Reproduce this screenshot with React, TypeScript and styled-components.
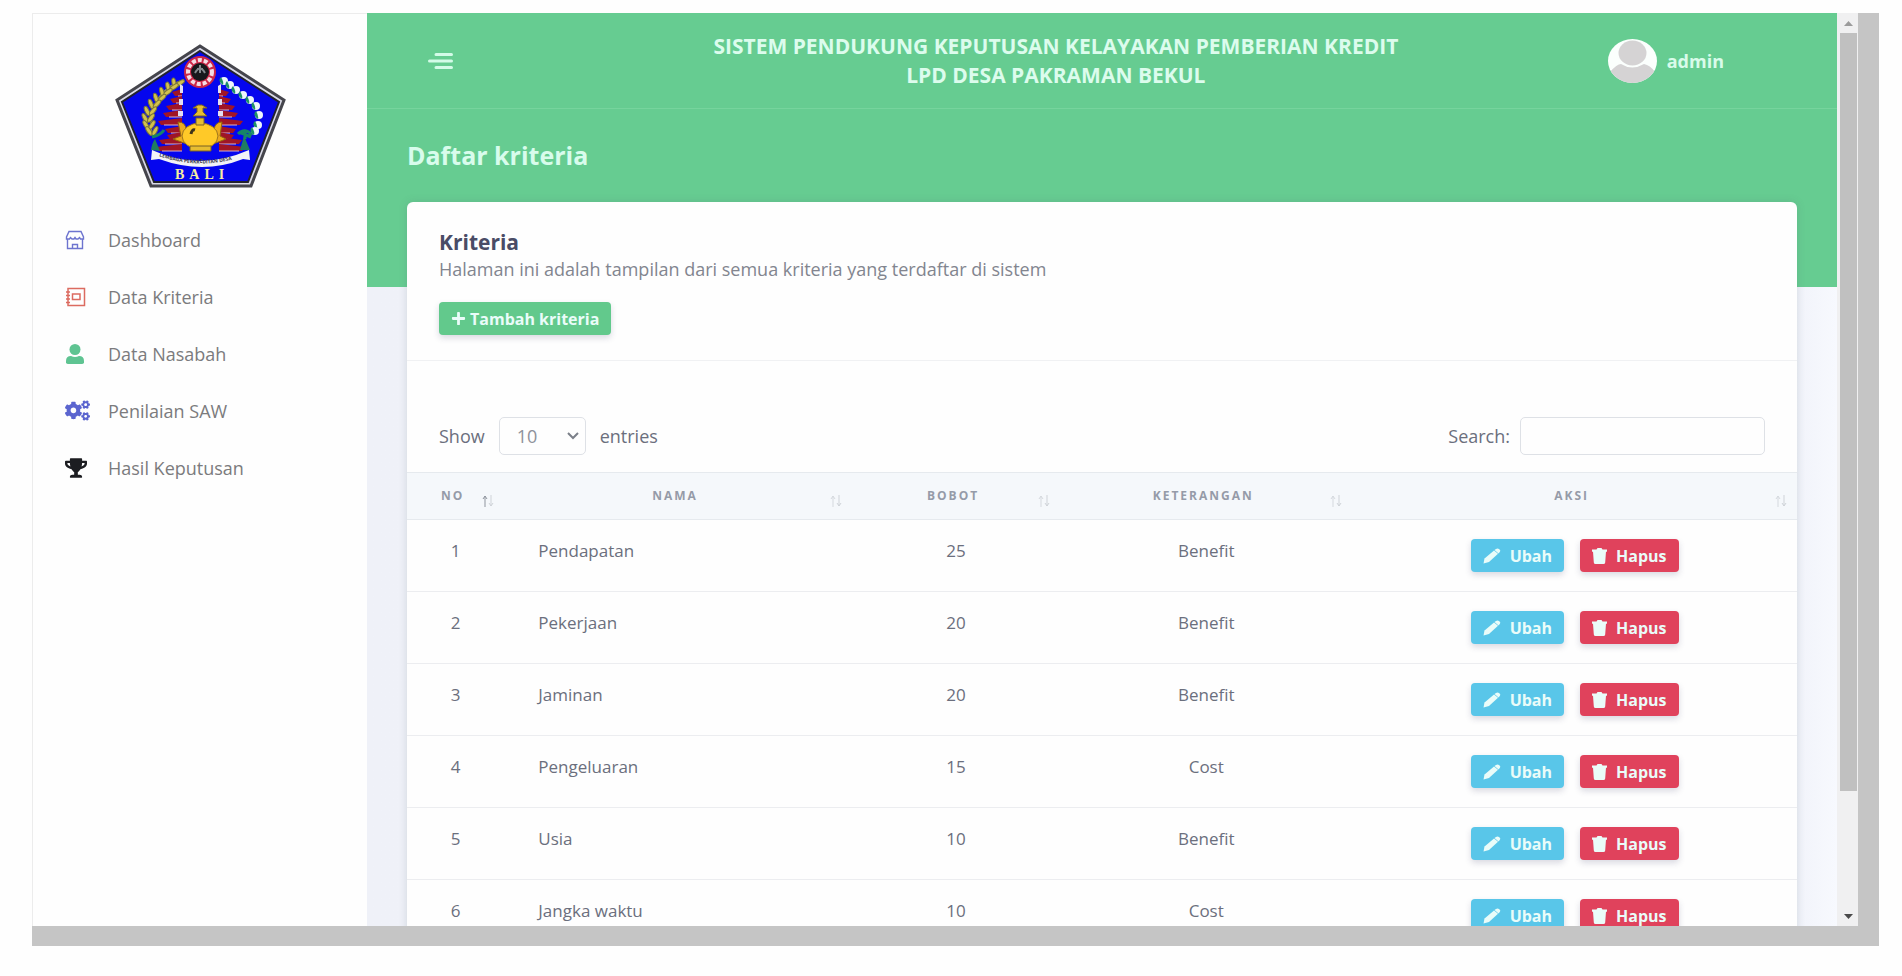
import React from 'react';
import styled, { createGlobalStyle } from 'styled-components';
import { FaCogs, FaPlus, FaTrophy } from 'react-icons/fa';

const GlobalStyle = createGlobalStyle`
  * { box-sizing: border-box; }
  body {
    margin: 0;
    background: #fefefe;
    font-family: 'Open Sans', 'Noto Sans', sans-serif;
    font-size: 17px;
    line-height: 24px;
    color: #6b6f7d;
  }
  button, input, select { font-family: inherit; }
`;

const Page = styled.div`
  height: 100vh;
  padding: 13px 23px 30px 32px;
`;

const Backdrop = styled.div`
  height: 100%;
  padding: 0 21px 20px 0;
  background: #c5c5c5;
`;

const Screen = styled.div`
  display: flex;
  height: 100%;
  overflow: hidden;
  background: #fefefe;
  box-shadow: inset 1px 1px 0 #ececec;
`;

const Sidebar = styled.aside`
  flex: 0 0 335px;
  padding-top: 30px;
`;

const Brand = styled.a`
  display: block;
  width: 174px;
  height: 148px;
  margin: 0 auto 20px;
`;

const NavLink = styled.a<{ $tone: string }>`
  display: grid;
  grid-template-columns: 27px 1fr;
  align-items: center;
  gap: 16px;
  height: 57px;
  padding-left: 33px;
  color: #7b7b7d;
  font-size: 18px;
  text-decoration: none;
  svg { color: ${(p) => p.$tone}; }
`;

const Main = styled.main`
  flex: 1;
  min-width: 0;
  background:
    linear-gradient(#66cc91, #66cc91) 0 0 / 100% 274px no-repeat,
    linear-gradient(90deg, #eff1f8, #f1f3fa 97%, #f7f9fe);
`;

const TopBar = styled.header`
  display: flex;
  align-items: center;
  height: 96px;
  padding: 0 113px 0 61px;
  border-bottom: 1px solid #76d49d;
`;

const MenuButton = styled.button`
  display: flex;
  width: 76px;
  padding: 0;
  border: 0;
  background: none;
  color: #d4fbe8;
  cursor: pointer;
`;

const SystemTitle = styled.h1`
  flex: 1;
  margin: 0;
  font-size: 21px;
  font-weight: 700;
  line-height: 29px;
  text-align: center;
  color: #dcfced;
`;

const User = styled.a`
  display: flex;
  align-items: center;
  gap: 10px;
  font-size: 18px;
  font-weight: 700;
  color: #d9fbea;
  text-decoration: none;
`;

const PageTitle = styled.h2`
  margin: 0;
  padding: 30px 40px 31px;
  font-size: 25px;
  font-weight: 700;
  line-height: 32px;
  color: #d8fcec;
`;

const Card = styled.section`
  margin: 0 40px;
  border-radius: 6px;
  background: #fefefe;
  box-shadow: 0 0 8px rgba(80, 100, 110, 0.2);
`;

const CardHeader = styled.div`
  padding: 26px 32px 25px;
  border-bottom: 1px solid #f0f1f3;
`;

const CardTitle = styled.h3`
  margin: 0;
  font-size: 21px;
  font-weight: 700;
  line-height: 28px;
  color: #4a4c66;
`;

const CardText = styled.p`
  margin: 0 0 20px;
  font-size: 18px;
  line-height: 26px;
  color: #82858f;
`;

const tones = { success: '#62c98c', info: '#59c6e9', danger: '#e0425c' };

const Button = styled.button<{ $tone: keyof typeof tones; $gap: number }>`
  display: inline-flex;
  align-items: center;
  justify-content: center;
  gap: ${(p) => p.$gap}px;
  height: 33px;
  padding: 0 12px;
  border: 0;
  border-radius: 4px;
  background: ${(p) => tones[p.$tone]};
  box-shadow: 0 3px 6px rgba(50, 50, 93, 0.18);
  color: #eafcf9;
  font-size: 16px;
  font-weight: 700;
  line-height: 20px;
  white-space: nowrap;
  cursor: pointer;
`;

const Controls = styled.div`
  display: flex;
  justify-content: space-between;
  padding: 56px 32px 17px;
`;

const Field = styled.label<{ $gap: number }>`
  display: flex;
  align-items: center;
  gap: ${(p) => p.$gap}px;
  font-size: 18px;
`;

const SelectBox = styled.span`
  display: grid;
  align-items: center;
  > * { grid-area: 1 / 1; }
  svg { justify-self: end; margin-right: 7px; pointer-events: none; }
`;

const Select = styled.select`
  width: 87px;
  height: 38px;
  padding: 0 17px;
  border: 1px solid #dee1e6;
  border-radius: 5px;
  appearance: none;
  background: #fefefe;
  color: #8e929b;
  font-size: 18px;
`;

const SearchInput = styled.input`
  width: 245px;
  height: 38px;
  padding: 0 12px;
  border: 1px solid #dee1e6;
  border-radius: 5px;
  background: #fefefe;
  font-size: 18px;
`;

const Table = styled.table`
  width: 100%;
  border-spacing: 0;
  table-layout: fixed;
`;

const HeadCell = styled.th`
  height: 48px;
  padding: 0 10px 0 16px;
  border-top: 1px solid #e6eaee;
  border-bottom: 1px solid #e6eaee;
  background: #f5f8fb;
  color: #959ba8;
  font-size: 12px;
  font-weight: 700;
  letter-spacing: 2px;
  line-height: 20px;
`;

const HeadInner = styled.span`
  display: flex;
  align-items: center;
  justify-content: space-between;
`;

const HeadLabel = styled.span`
  flex: 1;
`;

const Arrows = styled.span<{ $sorted: boolean }>`
  display: flex;
  padding-top: 10px;
  svg { color: #cfd3d8; }
  svg:first-child { color: ${(p) => (p.$sorted ? '#8f959e' : '#d5d9de')}; }
`;

const Cell = styled.td<{ $align?: string }>`
  height: 72px;
  padding: 19px 0 19px ${(p) => (p.$align === 'left' ? 34 : 0)}px;
  border-bottom: 1px solid #ecedf0;
  text-align: ${(p) => p.$align ?? 'center'};
  vertical-align: top;
`;

const Actions = styled.div`
  display: flex;
  justify-content: center;
  gap: 16px;
`;

const ScrollTrack = styled.div`
  display: flex;
  flex-direction: column;
  flex: 0 0 21px;
  background: #f0f0f1;
  padding: 0 1px 0 3px;
`;

const ScrollButton = styled.button`
  display: flex;
  align-items: center;
  justify-content: center;
  flex: 0 0 20px;
  padding: 0;
  border: 0;
  background: none;
`;

const ScrollThumb = styled.div`
  height: 758px;
  max-height: 87%;
  background: #c0c0c0;
`;

const ScrollGap = styled.div`
  flex: 1;
`;

function Emblem() {
  const leaves = [
    [107, 38], [113, 42], [119, 47], [126, 52], [133, 57], [139, 63], [142, 72], [141, 82], [138, 88],
  ];
  const wheat = [
    [64, 40], [58, 44], [52, 49], [46, 55], [41, 61], [37, 68], [35, 75], [36, 82], [39, 88],
  ];
  const tiers = [
    [7, 50], [9, 57], [13, 64], [16, 71], [21, 79], [14, 87], [12, 93], [20, 98], [23, 105],
  ];
  return (
    <svg viewBox="0 0 174 148" width="174" height="148" role="img" aria-label="Bali">
      <path d="M87 3 171 57 138 143H38L4 57Z" fill="#d9d9e6" stroke="#45454c" strokeWidth="3" />
      <path d="M87 8 166 59 135 139H41L9 59Z" fill="#0506ee" stroke="#22222e" strokeWidth="2" />
      <path d="M71 37Q37 48 38 88" fill="none" stroke="#9d9a5a" strokeWidth="2" />
      {wheat.map(([x, y], i) => (
        <g key={i} fill="#d3c14d" stroke="#77753b" strokeWidth="1">
          <ellipse cx={x - 3} cy={y} rx="2" ry="5" transform={`rotate(${-10 - i * 3} ${x - 3} ${y})`} />
          <ellipse cx={x + 3} cy={y} rx="2" ry="5" transform={`rotate(${60 - i * 4} ${x + 3} ${y})`} />
        </g>
      ))}
      {leaves.map(([x, y], i) => (
        <g key={i}>
          <circle cx={x + 4} cy={y} r="4" fill="#edf6fb" />
          <path d={`M${x + 1} ${y - 4}q-4 4 2 8q1-3-2-8`} fill="#1c8f66" />
        </g>
      ))}
      {tiers.map(([w, y], i) => (
        <g key={i}>
          <path d={`M69 ${y - 4}V${y + 3}H${69 - w}L${66 - w} ${y - 1}Z`} fill="#a01526" />
          <path d={`M106 ${y - 4}V${y + 3}H${106 + w}L${109 + w} ${y - 1}Z`} fill="#a01526" />
          <path d={`M69 ${y + 3}h-${w - 3}M106 ${y + 3}h${w - 3}`} stroke="#d9b4c5" strokeWidth="1" />
        </g>
      ))}
      <path d="M67 41v9h3v-7zM108 41v9h-3v-7zM66 56h4v6h-4zM105 56h4v6h-4zM65 68h5v5h-5zM105 68h5v5h-5z" fill="#e2dff2" />
      <circle cx="87" cy="29" r="16" fill="#cb2748" />
      <circle cx="87" cy="29" r="12" fill="none" stroke="#f3dce4" strokeWidth="4" strokeDasharray="4 2" />
      <circle cx="87" cy="29" r="9" fill="#17181c" />
      <path d="M82 30q5-9 10 0M84 26h6M87 22v8" fill="none" stroke="#83888d" strokeWidth="2" />
      <path d="M65 79q8 0 8 8h28q1-8 8-8l-2 14 6 3-13 5q-5 6-13 6t-13-6l-14-5 8-3Z" fill="#edac20" stroke="#92680f" strokeWidth="1" />
      <ellipse cx="87" cy="93" rx="18" ry="13" fill="#ffc928" stroke="#9d741c" strokeWidth="1" />
      <path d="M80 73h14l-4-4v-4h4l-5-3h-4l-5 3h4v4Zm3 2h8v7h-8ZM77 103h21v5H77Z" fill="#e7bd31" stroke="#786125" strokeWidth="1" />
      <path d="M78 91q1-5 4-4" fill="none" stroke="#40341a" strokeWidth="3" />
      <path d="M38 107q1-7 4-11l5 12ZM127 107l4-14 6 14Z" fill="#207d60" />
      <path d="M39 94q9-2 12-7M125 91q7-7 14 1M132 88v8M126 89l12 5" fill="none" stroke="#168567" strokeWidth="3" />
      <path d="M39 107q47 22 97 0l1 10-7-1q-40 16-84 0l-8 1Z" fill="#f1f2f7" />
      <path id="motto" d="M46 113q41 15 86 0" fill="none" />
      <text fontFamily="Open Sans, sans-serif" fontSize="5" fontWeight="700" fill="#3b3b49">
        <textPath href="#motto">LEMBAGA PERKREDITAN DESA</textPath>
      </text>
      <text x="62" y="136" fontFamily="Liberation Serif, serif" fontSize="14" fontWeight="700" letterSpacing="5" fill="#f5eda0">BALI</text>
    </svg>
  );
}

const ShopIcon = () => (
  <svg width="20" height="20" viewBox="0 0 20 20" fill="none" stroke="currentColor" strokeWidth="1.4">
    <path d="M4 1.5h12L18.500 7v2h-3l-1-1.500-1.500 1.500h-2L10 7.500 9 9H7L5.500 7.500 4.500 9h-3V7ZM2.500 9v9.500h15V9M7.500 18.500v-4h5v4" />
  </svg>
);

const CriteriaIcon = () => (
  <svg width="21" height="20" viewBox="0 0 21 20" fill="none" stroke="currentColor" strokeWidth="1.500">
    <path d="M3 1.500h16.500v17H3ZM7.500 7h7.500v5.500H7.500ZM1 5h4M1 8.500h4M1 12h4M1 15.500h4" />
  </svg>
);

const PersonIcon = () => (
  <svg width="20" height="20" viewBox="0 0 20 20" fill="currentColor">
    <circle cx="10" cy="5.500" r="5.500" />
    <path d="M1 19v-2q0-5 5-5 4 2 8 0 5 0 5 5v2q-1 1-2 1H3q-1 0-2-1Z" />
  </svg>
);

const PencilIcon = () => (
  <svg width="18" height="16" viewBox="0 0 18 16" fill="currentColor">
    <path d="M.5 15.500 1.500 10.500 11 2.500 15 5.800 6 14Z" />
    <path d="M11.500 2q2.500-2.500 4.500-1l1 1q1 1.300-1.500 3.500Z" />
  </svg>
);

const TrashIcon = () => (
  <svg width="15" height="16" viewBox="0 0 15 16" fill="currentColor">
    <path d="M0 1.500h4.500L5.500 0h4l1 1.500H15v2.300H0ZM1 3.500h13l-.8 11q-.2 1.500-1.700 1.500h-8q-1.500 0-1.700-1.500Z" />
  </svg>
);

const MenuIcon = () => (
  <svg width="25" height="16" viewBox="0 0 25 16" stroke="currentColor" strokeWidth="3" strokeLinecap="round">
    <path d="M8 1.500h15.500M1.500 8h22M8 14.500h15.500" />
  </svg>
);

const Avatar = () => (
  <svg width="49" height="44" viewBox="0 0 49 44" aria-hidden="true">
    <clipPath id="face"><ellipse cx="24.500" cy="22" rx="24.500" ry="22" /></clipPath>
    <g clipPath="url(#face)">
      <path d="M0 0h49v44H0z" fill="#fbfffd" />
      <path d="M2 44V33q7-8 11-8 11 7 23 0 6 1 11 8v11Z" fill="#d5d3d4" />
      <ellipse cx="24.500" cy="14" rx="14" ry="12.500" fill="#d5d3d4" />
    </g>
  </svg>
);

const ArrowUp = () => (
  <svg width="6" height="12" viewBox="0 0 6 12" fill="none" stroke="currentColor"><path d="M3 12V1M1 4l2-3 2 3" /></svg>
);

const ArrowDown = () => (
  <svg width="6" height="12" viewBox="0 0 6 12" fill="none" stroke="currentColor"><path d="M3 0v11M1 8l2 3 2-3" /></svg>
);

const navItems = [
  { label: 'Dashboard', tone: '#6d74cf', icon: <ShopIcon /> },
  { label: 'Data Kriteria', tone: '#dc6b60', icon: <CriteriaIcon /> },
  { label: 'Data Nasabah', tone: '#5fc492', icon: <PersonIcon /> },
  { label: 'Penilaian SAW', tone: '#5b65cf', icon: <FaCogs size={25} /> },
  { label: 'Hasil Keputusan', tone: '#1c1d21', icon: <FaTrophy size={22} /> },
];

const columns = [
  { label: 'NO', width: '7%' },
  { label: 'NAMA', width: '25%' },
  { label: 'BOBOT', width: '15%' },
  { label: 'KETERANGAN', width: '21%' },
  { label: 'AKSI', width: '32%' },
];

const rows = [
  { name: 'Pendapatan', weight: 25, kind: 'Benefit' },
  { name: 'Pekerjaan', weight: 20, kind: 'Benefit' },
  { name: 'Jaminan', weight: 20, kind: 'Benefit' },
  { name: 'Pengeluaran', weight: 15, kind: 'Cost' },
  { name: 'Usia', weight: 10, kind: 'Benefit' },
  { name: 'Jangka waktu', weight: 10, kind: 'Cost' },
];

export default function App() {
  return (
    <Page>
      <GlobalStyle />
      <Backdrop>
        <Screen>
          <Sidebar>
            <Brand href="#"><Emblem /></Brand>
            <nav>
              {navItems.map((item) => (
                <NavLink key={item.label} href="#" $tone={item.tone}>
                  {item.icon}
                  {item.label}
                </NavLink>
              ))}
            </nav>
          </Sidebar>
          <Main>
            <TopBar>
              <MenuButton aria-label="Menu"><MenuIcon /></MenuButton>
              <SystemTitle>
                SISTEM PENDUKUNG KEPUTUSAN KELAYAKAN PEMBERIAN KREDIT
                <br />
                LPD DESA PAKRAMAN BEKUL
              </SystemTitle>
              <User href="#"><Avatar />admin</User>
            </TopBar>
            <PageTitle>Daftar kriteria</PageTitle>
            <Card>
              <CardHeader>
                <CardTitle>Kriteria</CardTitle>
                <CardText>Halaman ini adalah tampilan dari semua kriteria yang terdaftar di sistem</CardText>
                <Button $tone="success" $gap={4}><FaPlus size={15} />Tambah kriteria</Button>
              </CardHeader>
              <Controls>
                <Field $gap={14}>
                  Show
                  <SelectBox>
                    <Select defaultValue="10">
                      <option>10</option>
                      <option>25</option>
                      <option>50</option>
                      <option>100</option>
                    </Select>
                    <svg width="12" height="8" viewBox="0 0 12 8" fill="none" stroke="#7b8089" strokeWidth="2">
                      <path d="m1 1 5 5 5-5" />
                    </svg>
                  </SelectBox>
                  entries
                </Field>
                <Field $gap={10}>
                  Search:
                  <SearchInput type="search" />
                </Field>
              </Controls>
              <Table>
                <colgroup>
                  {columns.map((c) => <col key={c.label} width={c.width} />)}
                </colgroup>
                <thead>
                  <tr>
                    {columns.map((c, i) => (
                      <HeadCell key={c.label} scope="col">
                        <HeadInner>
                          <HeadLabel>{c.label}</HeadLabel>
                          <Arrows $sorted={i === 0}><ArrowUp /><ArrowDown /></Arrows>
                        </HeadInner>
                      </HeadCell>
                    ))}
                  </tr>
                </thead>
                <tbody>
                  {rows.map((row, i) => (
                    <tr key={row.name}>
                      <Cell>{i + 1}</Cell>
                      <Cell $align="left">{row.name}</Cell>
                      <Cell>{row.weight}</Cell>
                      <Cell>{row.kind}</Cell>
                      <Cell>
                        <Actions>
                          <Button $tone="info" $gap={9}><PencilIcon />Ubah</Button>
                          <Button $tone="danger" $gap={9}><TrashIcon />Hapus</Button>
                        </Actions>
                      </Cell>
                    </tr>
                  ))}
                </tbody>
              </Table>
            </Card>
          </Main>
          <ScrollTrack>
            <ScrollButton aria-label="Scroll up">
              <svg width="9" height="5" viewBox="0 0 9 5"><path d="M0 5 4.500 0 9 5Z" fill="#9b9b9b" /></svg>
            </ScrollButton>
            <ScrollThumb />
            <ScrollGap />
            <ScrollButton aria-label="Scroll down">
              <svg width="9" height="5" viewBox="0 0 9 5"><path d="M0 0h9L4.500 5Z" fill="#4a4a4a" /></svg>
            </ScrollButton>
          </ScrollTrack>
        </Screen>
      </Backdrop>
    </Page>
  );
}
